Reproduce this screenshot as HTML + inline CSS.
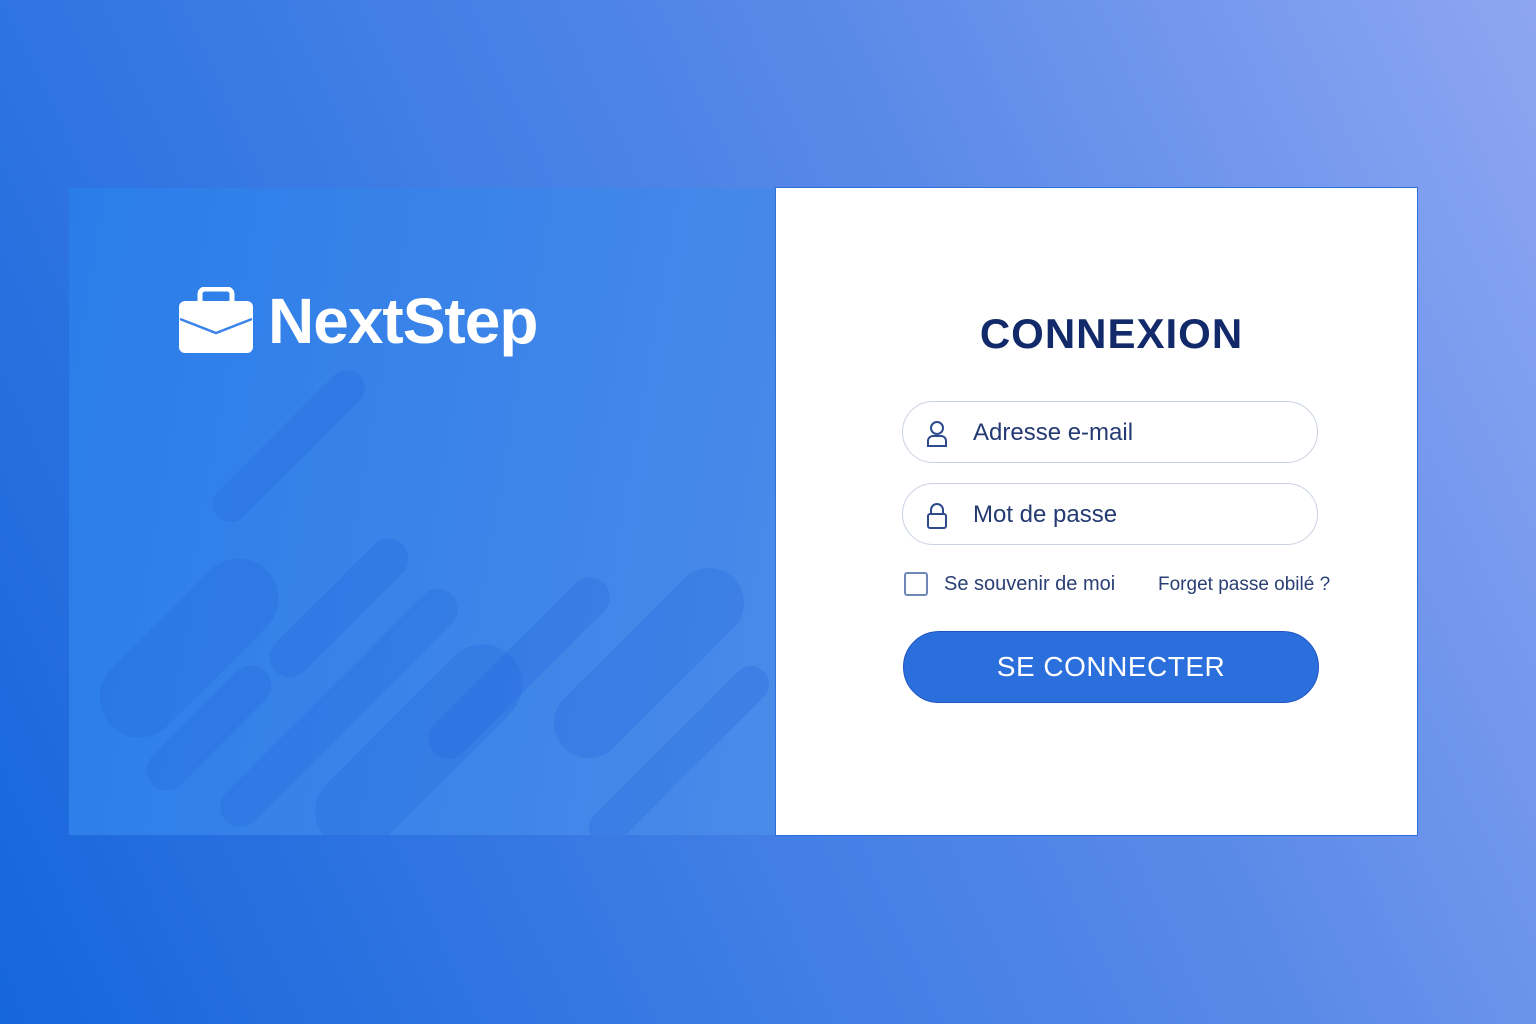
<!DOCTYPE html>
<html><head><meta charset="utf-8"><style>
body{margin:0;width:1536px;height:1024px;overflow:hidden;font-family:"Liberation Sans",sans-serif;
background:linear-gradient(65deg,#1666dc 0%,#3a7ae4 35%,#5a8ae8 65%,#8ea6f2 100%);position:relative}
.left{position:absolute;left:69px;top:188px;width:706px;height:647px;background:linear-gradient(100deg,#2a7de9,#4a8ae9);overflow:hidden}
.pill{position:absolute;background:rgba(30,100,220,0.25);border-radius:40px;transform:rotate(-45deg);transform-origin:center}
.right{position:absolute;left:776px;top:188px;width:641px;height:647px;background:#fff;box-shadow:0 0 0 1px #2f6fd8}
.logo{position:absolute;left:178px;top:284px;display:flex;align-items:center}
.logo span{color:#fff;font-weight:bold;font-size:64px;margin-left:14px;letter-spacing:-1px}
h1{position:absolute;left:0;width:100%;top:122px;margin:0;text-align:center;font-size:42px;color:#122a6a;letter-spacing:1px;font-weight:bold;padding-left:30px;box-sizing:border-box}
.inp{position:absolute;left:126px;width:416px;height:62px;border:1px solid #c9d2e3;border-radius:32px;box-sizing:border-box}
.inp svg{position:absolute;left:22px;top:18px}
.inp div{position:absolute;left:70px;top:17px;font-size:24px;color:#233a72}
.row{position:absolute;top:384px;font-size:20px;color:#2a3f73}
.btn{position:absolute;left:127px;top:443px;width:416px;height:72px;border-radius:36px;background:#2b6fdc;border:1px solid #1f56c0;box-sizing:border-box;color:#fff;font-size:28px;text-align:center;line-height:70px;letter-spacing:0.5px}
</style></head><body>
<div class="left">
<div class="pill" style="left:10px;top:420px;width:220px;height:80px"></div>
<div class="pill" style="left:180px;top:400px;width:180px;height:40px"></div>
<div class="pill" style="left:120px;top:240px;width:200px;height:36px"></div>
<div class="pill" style="left:60px;top:520px;width:160px;height:40px"></div>
<div class="pill" style="left:110px;top:500px;width:320px;height:40px"></div>
<div class="pill" style="left:220px;top:520px;width:260px;height:80px"></div>
<div class="pill" style="left:330px;top:460px;width:240px;height:40px"></div>
<div class="pill" style="left:460px;top:440px;width:240px;height:70px"></div>
<div class="pill" style="left:490px;top:550px;width:240px;height:36px"></div>
</div>
<div class="logo">
<svg width="76" height="68" viewBox="0 0 76 68"><rect x="22" y="2" width="32" height="16" rx="5" fill="none" stroke="#fff" stroke-width="5"/><rect x="1" y="14" width="74" height="52" rx="6" fill="#fff"/><path d="M2 32 L38 46 L74 32" fill="none" stroke="#3a83e8" stroke-width="2.5"/></svg>
<span>NextStep</span>
</div>
<div class="right">
<h1>CONNEXION</h1>
<div class="inp" style="top:213px"><svg width="24" height="28" viewBox="0 0 24 28"><circle cx="12" cy="8" r="6" fill="none" stroke="#2d4a8c" stroke-width="2"/><path d="M3 26 V21 a5 5 0 0 1 5-5 h8 a5 5 0 0 1 5 5 V26 Z" fill="none" stroke="#2d4a8c" stroke-width="2"/></svg><div>Adresse e-mail</div></div>
<div class="inp" style="top:295px"><svg width="24" height="28" viewBox="0 0 24 28"><path d="M6 12 V8 a6 6 0 0 1 12 0 V12" fill="none" stroke="#2d4a8c" stroke-width="2"/><rect x="3" y="12" width="18" height="14" rx="2" fill="none" stroke="#2d4a8c" stroke-width="2"/></svg><div>Mot de passe</div></div>
<div class="row" style="left:128px;display:flex;align-items:center"><span style="width:20px;height:20px;border:2px solid #6f88b8;border-radius:3px;display:inline-block;margin-right:16px"></span>Se souvenir de moi</div>
<div class="row" style="left:382px;top:386px;font-size:19px">Forget passe obilé ?</div>
<div class="btn">SE CONNECTER</div>
</div>
</body></html>
